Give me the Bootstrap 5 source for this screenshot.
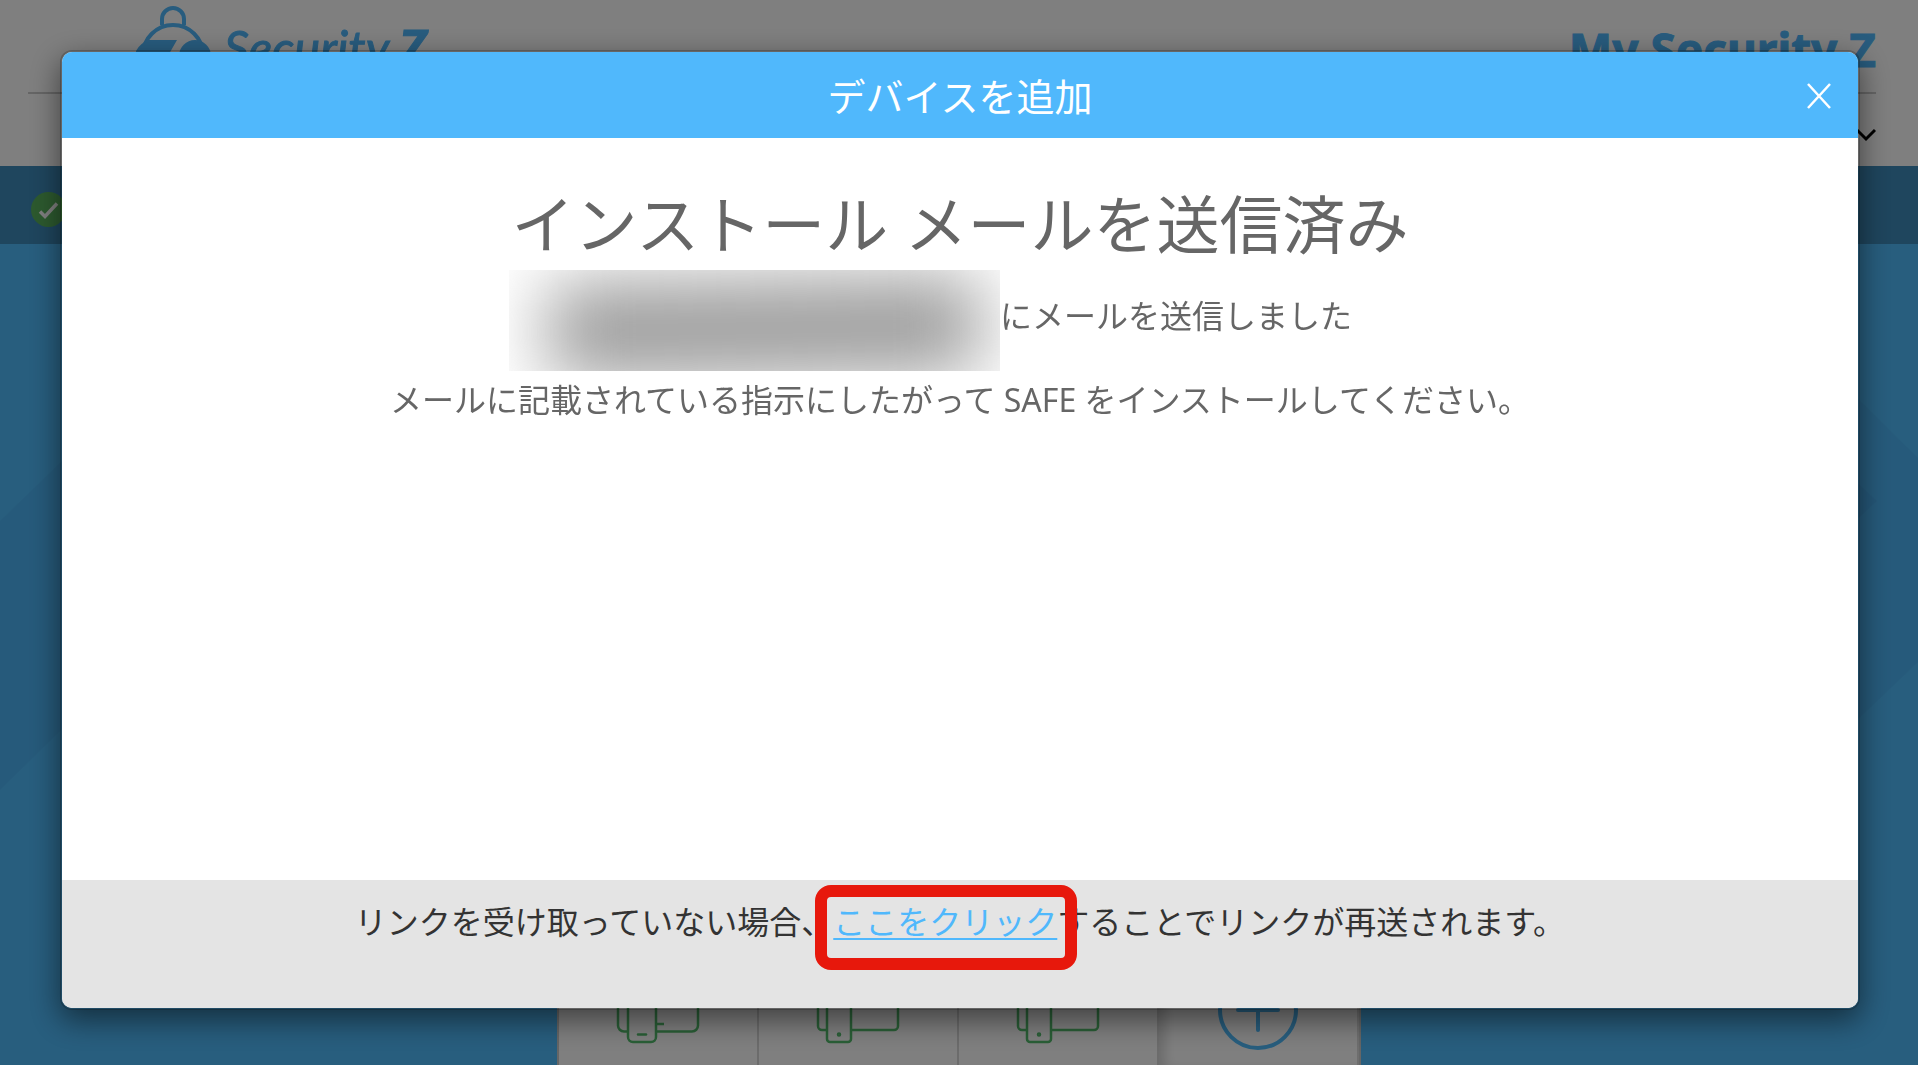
<!DOCTYPE html>
<html lang="ja">
<head>
<meta charset="utf-8">
<meta name="viewport" content="width=device-width, initial-scale=1">
<title>My Security Z</title>
<link href="https://cdn.jsdelivr.net/npm/bootstrap@5.3.0/dist/css/bootstrap.min.css" rel="stylesheet">
<style>
  :root { --sz-blue: #50b8fc; }
  body {
    font-family: "Noto Sans", "Noto Sans CJK JP", sans-serif;
    background: #50bcfc;
    color: #666;
  }
  .site-top { height: 166px; background: #fff; padding: 0 42px 0 28px; }
  .brand-row { height: 94px; border-bottom: 2px solid #ccc; }
  .brand-link { color: #50b8fc; padding: 1px 0 0 108px; }
  .brand-link svg { width: 76px; height: 86px; }
  .wordmark { font: italic 400 49px/56px Lato, sans-serif; margin: 18px 0 0 12px; -webkit-text-stroke: 1px; }
  .wordmark b { font-weight: 900; }
  .portal-name { font-size: 46px; line-height: 64px; color: #50b8fc; margin-top: 17px; -webkit-text-stroke: 1px; }
  .menu-toggle svg { width: 20px; height: 14px; }
  .account-row { height: 72px; padding-top: 34px; }
  .status-band { height: 78px; background: #3e8cbc; padding-left: 31px; }
  .status-band svg { width: 35px; height: 35px; margin-top: 8px; }
  .stage { min-height: 0; }
  .stage-art { inset: 0; width: 100%; height: 100%; }
  .device-row { width: 804px; margin: 600px auto 0; background: #fff; border: 2px solid #ccc; border-bottom: 0; }
  .device-cell { height: 219px; border-right: 2px solid #d8d8d8; padding: 80px 0 0; }
  .device-cell svg { width: 96px; height: 120px; }
  .add-cell { border-right: 2px solid #ddd; padding-top: 122px; box-shadow: inset 12px 0 12px -6px rgba(0,0,0,.16); }
  .add-cell svg { width: 84px; height: 84px; }

  .add-dialog { max-width: none; margin: 50px 58px 50px 60px; }
  .add-dialog .modal-content {
    border: 2px solid rgba(0,0,0,.2);
    border-radius: 12px;
    box-shadow: 0 10px 30px rgba(0,0,0,.5);
  }
  .add-dialog .modal-header { height: 86px; background: var(--sz-blue); color: #fff; border: 0; border-radius: 10px 10px 0 0; padding: 2px 24px 0; }
  .add-dialog .modal-title { font-size: 38px; line-height: 56px; font-weight: 400; }
  .close-btn { position: absolute; right: 24px; color: #fff; line-height: 0; }
  .close-btn svg { width: 30px; height: 30px; }
  .add-dialog .modal-body { min-height: calc(100vh - 323px); padding: 40px 24px; font-size: 32px; line-height: 48px; color: #666; }
  .sent-title { font-size: 63px; line-height: 92px; font-weight: 400; margin-bottom: 22px; }
  .install-note { margin-top: 36px; }
  .masked { display: inline-block; position: relative; width: 432px; height: 48px; vertical-align: top; }
  .masked-fill { position: absolute; right: 0; top: -22px; width: 491px; height: 101px; overflow: hidden; background: #fff; }
  .masked-fill::before { content: ""; position: absolute; left: 40px; right: 20px; top: 12px; height: 92px; background: #969696; filter: blur(36px); transform: rotate(-1deg); }
  .add-dialog .modal-footer { height: 128px; background: #e4e4e4; border: 0; border-radius: 0 0 10px 10px; padding: 18px 24px; color: #333; font-size: 32px; line-height: 48px; }
  .resend { position: relative; color: var(--sz-blue); text-decoration-thickness: 2px; text-underline-offset: 4px; }
  .resend::after { content: ""; position: absolute; inset: -15px -20px -27px -18px; border: 12px solid #e7180c; border-radius: 16px; }
</style>
<script src="https://cdn.jsdelivr.net/npm/bootstrap@5.3.0/dist/js/bootstrap.bundle.min.js"></script>
</head>
<body class="modal-open overflow-hidden vh-100 d-flex flex-column">

<header class="site-top flex-shrink-0">
  <div class="brand-row d-flex justify-content-between align-items-start">
    <a href="#" class="brand-link d-flex text-decoration-none" aria-label="Security Z">
      <svg viewBox="0 0 76 86" fill="none" stroke="currentColor" stroke-width="4">
        <path d="M26 24V18a11 11 0 0 1 22 0v6"/>
        <circle cx="37" cy="54" r="30"/>
        <path d="M13 39H41L33 53V64H8Q-4 58 0 50Q4 42 13 39Z" fill="currentColor" stroke="none"/>
        <ellipse cx="59" cy="55" rx="16" ry="16" fill="currentColor" stroke="none"/>
      </svg>
      <span class="wordmark">Security <b>Z</b></span>
    </a>
    <div class="portal-name fw-bold">My Security Z</div>
  </div>
  <div class="account-row d-flex justify-content-end align-items-start">
    <button type="button" class="menu-toggle btn p-0 border-0 d-flex" aria-label="メニュー">
      <svg viewBox="0 0 20 14" fill="none" stroke="#000" stroke-width="3"><path d="M1 2l9 9 9-9"/></svg>
    </button>
  </div>
</header>

<div class="status-band flex-shrink-0 d-flex align-items-center">
  <svg viewBox="0 0 35 35"><circle cx="17.500" cy="17.500" r="17.500" fill="#5ab45e"/><path d="M9 19.500l5 5L26 11.500" fill="none" stroke="#fff" stroke-width="3.500"/></svg>
</div>

<main class="stage flex-grow-1 position-relative overflow-hidden">
  <svg class="stage-art position-absolute" viewBox="0 0 1918 821" preserveAspectRatio="none" fill="#1a1a5a" fill-opacity=".04">
    <path d="M0 277L100 180V448L0 546Z"/>
    <path d="M1800 97L1918 214V418L1800 531Z"/>
    <path d="M1830 213L1877 257L1830 301Z"/>
  </svg>
  <div class="device-row position-relative d-flex">
    <div class="device-cell col text-center">
      <svg viewBox="0 0 96 120" fill="none" stroke="#54be6e" stroke-width="2.500"><path d="M17 105.500H14a6 6 0 0 1-6-6V48a6 6 0 0 1 6-6H82a6 6 0 0 1 6 6V99.500a6 6 0 0 1-6 6H46M46 98H54"/><rect x="18" y="52" width="28" height="64" rx="5"/><path d="M28 108.500h8" stroke-linecap="round"/></svg>
    </div>
    <div class="device-cell col text-center">
      <svg viewBox="0 0 96 120" fill="none" stroke="#54be6e" stroke-width="2.500"><path d="M17 104H12a4 4 0 0 1-4-4V48a4 4 0 0 1 4-4H84a4 4 0 0 1 4 4V100a4 4 0 0 1-4 4H41"/><rect x="17" y="52" width="24" height="64" rx="3"/><circle cx="29" cy="108.500" r="1"/></svg>
    </div>
    <div class="device-cell col text-center">
      <svg viewBox="0 0 96 120" fill="none" stroke="#54be6e" stroke-width="2.500"><path d="M17 104H12a4 4 0 0 1-4-4V48a4 4 0 0 1 4-4H84a4 4 0 0 1 4 4V100a4 4 0 0 1-4 4H41"/><rect x="17" y="52" width="24" height="64" rx="3"/><circle cx="29" cy="108.500" r="1"/></svg>
    </div>
    <div class="device-cell add-cell col text-center">
      <svg viewBox="0 0 84 84" fill="none" stroke="#50bcfc" stroke-width="4" stroke-linecap="round"><circle cx="42" cy="42" r="38"/><path d="M22 42H62M42 22V62"/></svg>
    </div>
  </div>
</main>

<div class="modal-backdrop show"></div>
<div class="modal show d-block overflow-hidden" role="dialog" aria-modal="true" aria-labelledby="dialogTitle">
  <div class="modal-dialog add-dialog">
    <div class="modal-content">
      <div class="modal-header d-flex justify-content-center align-items-center">
        <h1 class="modal-title" id="dialogTitle">デバイスを追加</h1>
        <button type="button" class="close-btn btn p-0 border-0" aria-label="閉じる">
          <svg viewBox="0 0 30 30" fill="none" stroke="#fff" stroke-width="2.500"><path d="M4 3L26 27M26 3L4 27"/></svg>
        </button>
      </div>
      <div class="modal-body text-center">
        <h2 class="sent-title">インストール メールを送信済み</h2>
        <p class="mb-0"><span class="masked"><span class="masked-fill"></span></span>にメールを送信しました</p>
        <p class="install-note mb-0">メールに記載されている指示にしたがって SAFE をインストールしてください。</p>
      </div>
      <div class="modal-footer d-block text-center">
        <p class="m-0">リンクを受け取っていない場合、<a href="#" class="resend">ここをクリック</a>することでリンクが再送されます。</p>
      </div>
    </div>
  </div>
</div>
</body>
</html>
